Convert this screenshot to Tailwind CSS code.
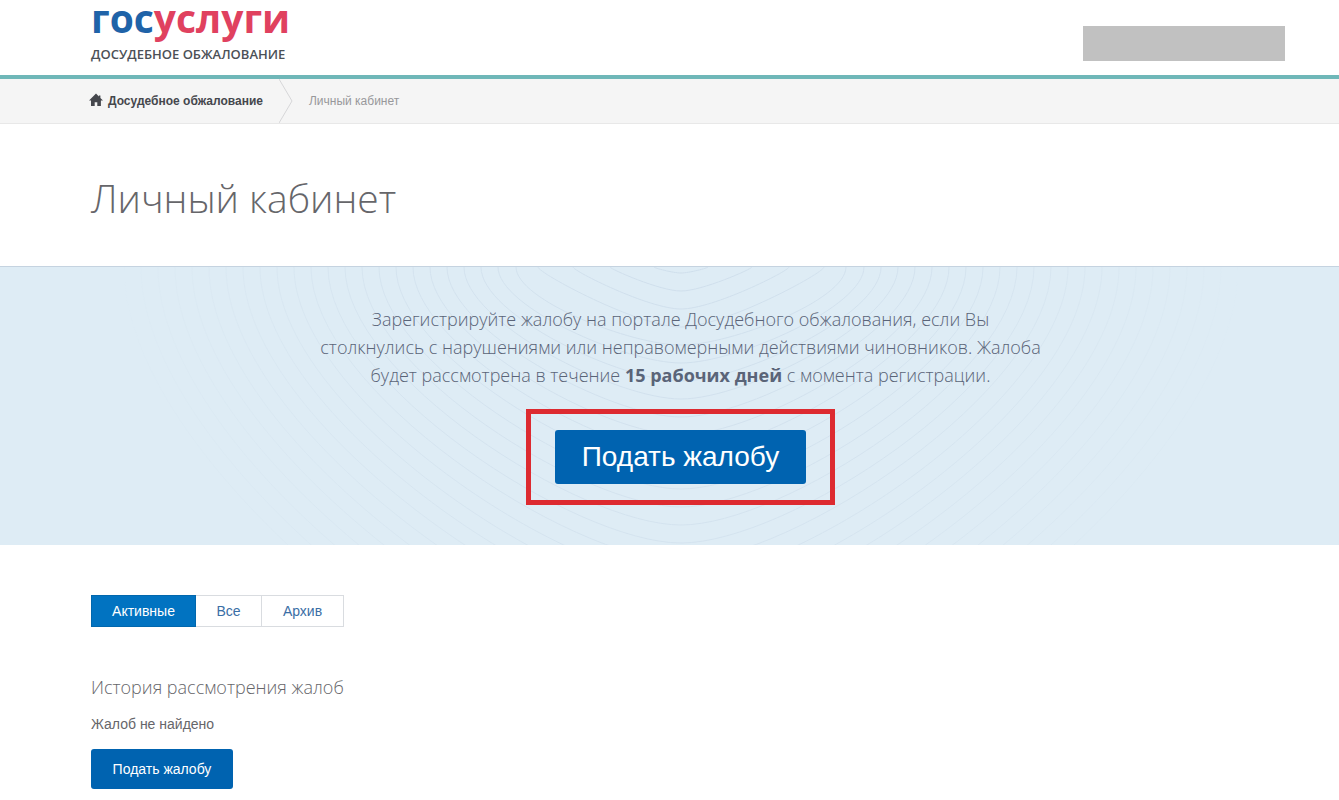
<!DOCTYPE html>
<html lang="ru">
<head>
    <meta charset="UTF-8">
    <meta name="viewport" content="width=device-width, initial-scale=1.0">
    <title>Личный кабинет</title>
    <script src="https://cdn.jsdelivr.net/npm/@tailwindcss/browser@4"></script>
</head>
<body class="bg-white font-['Liberation_Sans',Arial,sans-serif] text-sm text-[#66666a]">
    <header class="flex items-start justify-between h-[79px] pl-[91px] pr-[54px] border-b-4 border-[#6fb7b8]">
        <a href="#" class="flex flex-col font-['Open_Sans',sans-serif]">
            <span class="text-[39px] leading-9 font-bold text-[#e0415f]"><span class="text-[#1f63a8]">гос</span>услуги</span>
            <span class="mt-2 text-[13px] leading-5 font-semibold text-[#4c5157]">ДОСУДЕБНОЕ ОБЖАЛОВАНИЕ</span>
        </a>
        <div class="mt-[26px] w-[202px] h-[35px] bg-[#c1c1c1]"></div>
    </header>

    <nav class="flex items-stretch h-[45px] pl-[89px] bg-[#f5f5f5] border-b border-[#e8e8e8] text-xs" aria-label="Навигация">
        <a href="#" class="flex items-center gap-1 font-bold text-[#45474d]">
            <svg class="w-[15px] h-4" viewBox="0 0 15 16" fill="#45474d">
                <path d="M7 0.5 0 7.4h2V13h3.7V9.2h2.6V13h3.6V7.4h2.1L11.4 5V2.4H9.9v1z"/>
            </svg>
            Досудебное обжалование
        </a>
        <svg class="ml-4 w-[14px] h-[44px]" viewBox="0 0 14 44" fill="none" stroke="#d6d6d8">
            <path d="M0 0 13 22 0 44"/>
        </svg>
        <span class="flex items-center ml-4 text-[#98989b]">Личный кабинет</span>
    </nav>

    <main>
        <h1 class="pl-[91px] pt-[46px] pb-10 text-[39px] leading-[56px] font-light text-[#66666a] font-['Open_Sans',sans-serif]">Личный кабинет</h1>

        <section class="relative overflow-hidden h-[279px] pl-[91px] pr-[69px] pt-[38px] bg-[#deecf5] border-t border-[#c5d3e0]">
            <div class="absolute inset-y-0 left-[91px] right-[69px] flex justify-center">
                <svg class="shrink-0 w-[1200px] h-[279px]" viewBox="-600 0 1200 279" fill="none" stroke="#c9d9e8">
                    <defs>
                        <radialGradient id="fade" gradientUnits="userSpaceOnUse" cx="0" cy="0" r="560">
                            <stop offset="0" stop-color="#fff" stop-opacity=".7"/>
                            <stop offset=".5" stop-color="#fff" stop-opacity=".45"/>
                            <stop offset="1" stop-color="#fff" stop-opacity="0"/>
                        </radialGradient>
                        <mask id="mask" maskUnits="userSpaceOnUse" x="-600" y="0" width="1200" height="279">
                            <rect x="-600" width="1200" height="279" fill="url(#fade)" stroke="none"/>
                        </mask>
                    </defs>
                    <g mask="url(#mask)"><path id="waves"/></g>
                </svg>
            </div>
            <div class="relative flex flex-col items-center">
                <p class="max-w-[800px] text-center text-[18px] leading-7 font-light text-[#5a6478] font-['Open_Sans',sans-serif]">Зарегистрируйте жалобу на портале Досудебного обжалования, если Вы<br>столкнулись с нарушениями или неправомерными действиями чиновников. Жалоба<br>будет рассмотрена в течение <b class="font-bold">15 рабочих дней</b> с момента регистрации.</p>
                <div class="mt-5 px-6 py-4 border-5 border-[#dd2a30]">
                    <button type="button" class="block w-[251px] h-[54px] rounded-[3px] bg-[#0063b0] text-[28px] text-white">Подать жалобу</button>
                </div>
            </div>
        </section>

        <section class="pl-[91px] pt-[50px]">
            <div class="flex h-8">
                <button type="button" class="w-[105px] bg-[#0173c1] border border-[#0167ad] text-white">Активные</button>
                <button type="button" class="w-[66px] border border-l-0 border-[#d9dce0] text-[#3a6ea5]">Все</button>
                <button type="button" class="w-[82px] border border-l-0 border-[#d9dce0] text-[#3a6ea5]">Архив</button>
            </div>
            <h2 class="mt-[46px] text-[18px] leading-7 font-light font-['Open_Sans',sans-serif]">История рассмотрения жалоб</h2>
            <p class="mt-[13px] leading-5">Жалоб не найдено</p>
            <button type="button" class="mt-[15px] w-[142px] h-10 rounded-[3px] bg-[#0063b0] text-white">Подать жалобу</button>
        </section>
    </main>

    <script>
        // contour lines behind the banner text, one below another
        const start = [27, 71, 108, 143, 165, 183];
        let d = '';
        for (let i = 0; i < 28; i++) {
            const w = i < 6 ? start[i] : 183 + (i - 5) * 17;
            const h = 6 + i * 18;
            const c = Math.round(h * (i < 4 ? 0.1 : 0.42));
            const k = Math.round(w * 0.3);
            d += `M${-w} 0C${-w} ${c} ${-k} ${h} 0 ${h}S${w} ${c} ${w} 0`;
        }
        document.getElementById('waves').setAttribute('d', d);
    </script>
</body>
</html>
